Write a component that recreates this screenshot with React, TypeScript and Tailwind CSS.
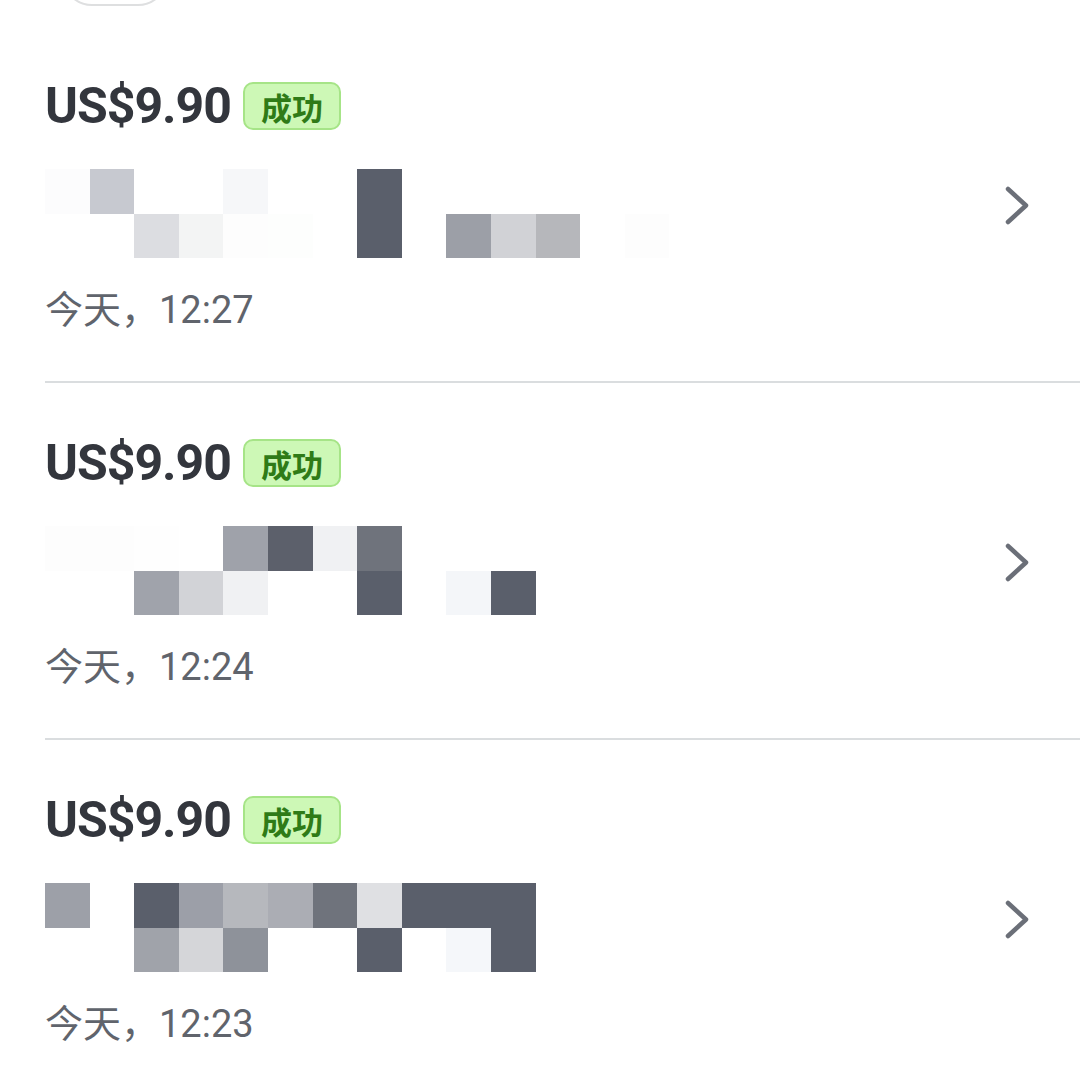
type Row = string[];

interface Payment {
  amount: string;
  status: string;
  time: string;
  mosaic: [Row, Row];
}

// description is blurred out in the source, so it's kept as a mosaic of grey cells
const PAYMENTS: Payment[] = [
  {
    amount: "US$9.90",
    status: "成功",
    time: "今天，12:27",
    mosaic: [
      ["bg-[#fcfcfd]", "bg-[#c7c9d0]", "", "", "bg-[#f6f7f9]", "", "", "bg-[#5a5f6b]", "", "", "", "", "", ""],
      ["", "", "bg-[#dcdde1]", "bg-[#f3f4f4]", "bg-[#fdfdfd]", "bg-[#fdfefd]", "", "bg-[#5a5f6b]", "", "bg-[#9c9fa7]", "bg-[#d1d2d6]", "bg-[#b6b7bb]", "", "bg-[#fdfdfd]"],
    ],
  },
  {
    amount: "US$9.90",
    status: "成功",
    time: "今天，12:24",
    mosaic: [
      ["bg-[#fdfdfd]", "bg-[#fdfdfd]", "bg-[#fefefe]", "", "bg-[#9fa2aa]", "bg-[#5c606b]", "bg-[#f0f1f3]", "bg-[#6f737c]", "", "", "", "", "", ""],
      ["", "", "bg-[#a0a3ab]", "bg-[#d2d3d7]", "bg-[#f0f1f3]", "", "", "bg-[#5a5f6b]", "", "bg-[#f4f6f9]", "bg-[#5a5f6b]", "", "", ""],
    ],
  },
  {
    amount: "US$9.90",
    status: "成功",
    time: "今天，12:23",
    mosaic: [
      ["bg-[#9da0a8]", "", "bg-[#5a5f6b]", "bg-[#9c9fa8]", "bg-[#b6b8bd]", "bg-[#abadb4]", "bg-[#6f737c]", "bg-[#dfe0e3]", "bg-[#5a5f6b]", "bg-[#5a5f6b]", "bg-[#5a5f6b]", "", "", ""],
      ["", "", "bg-[#a0a3aa]", "bg-[#d5d6d9]", "bg-[#8e929a]", "", "", "bg-[#5a5f6b]", "", "bg-[#f5f7fa]", "bg-[#5a5f6b]", "", "", ""],
    ],
  },
];

function Chevron() {
  return (
    <svg width="26" height="45" viewBox="0 0 26 45" fill="none" className="shrink-0">
      <path d="M4 6 L22 22.5 L4 39" stroke="#6b6f78" strokeWidth="4.5" strokeLinecap="round" strokeLinejoin="round" />
    </svg>
  );
}

function Mosaic({ rows }: { rows: [Row, Row] }) {
  return (
    <div className="grid grid-cols-[repeat(14,44.6px)]">
      {rows.flatMap((row, ri) =>
        row.map((cls, ci) => <div key={`${ri}-${ci}`} className={`h-[44.5px] ${cls}`} />),
      )}
    </div>
  );
}

function PaymentRow({ p, first }: { p: Payment; first: boolean }) {
  return (
    <div className={`flex items-center pl-[45px] pr-[50px] pb-[52px] ${first ? "pt-[76px]" : "pt-[56px]"}`}>
      <div className="flex-1">
        <div className="flex h-[48px] items-center">
          <span className="font-['Roboto',sans-serif] text-[50px] font-bold leading-none tracking-[-1px] text-[#33363d]">
            {p.amount}
          </span>
          <span className="ml-[12px] flex h-[48px] items-center rounded-[10px] border-2 border-[#a6e487] bg-[#cdf8b6] px-[16px] font-['Noto_Sans_CJK_SC',sans-serif] text-[31px] font-bold leading-none text-[#2f7b17]">
            {p.status}
          </span>
        </div>
        <div className="mt-[39px]">
          <Mosaic rows={p.mosaic} />
        </div>
        <p className="mt-[33px] h-[38px] font-['Roboto','Noto_Sans_CJK_SC',sans-serif] text-[38px] leading-[38px] text-[#60646c]">
          {p.time}
        </p>
      </div>
      <Chevron />
    </div>
  );
}

export default function App() {
  return (
    <div className="min-h-[1079px] w-[1080px] overflow-hidden bg-white">
      {/* filter pill cut off by the top edge */}
      <div className="-mt-[54px] ml-[62px] h-[60px] w-[106px] rounded-full border-2 border-[#dedfe0]" />
      {PAYMENTS.map((p, i) => (
        <div key={i}>
          <PaymentRow p={p} first={i === 0} />
          {i < PAYMENTS.length - 1 && <div className="ml-[45px] h-[2px] bg-[#dadddf]" />}
        </div>
      ))}
    </div>
  );
}
